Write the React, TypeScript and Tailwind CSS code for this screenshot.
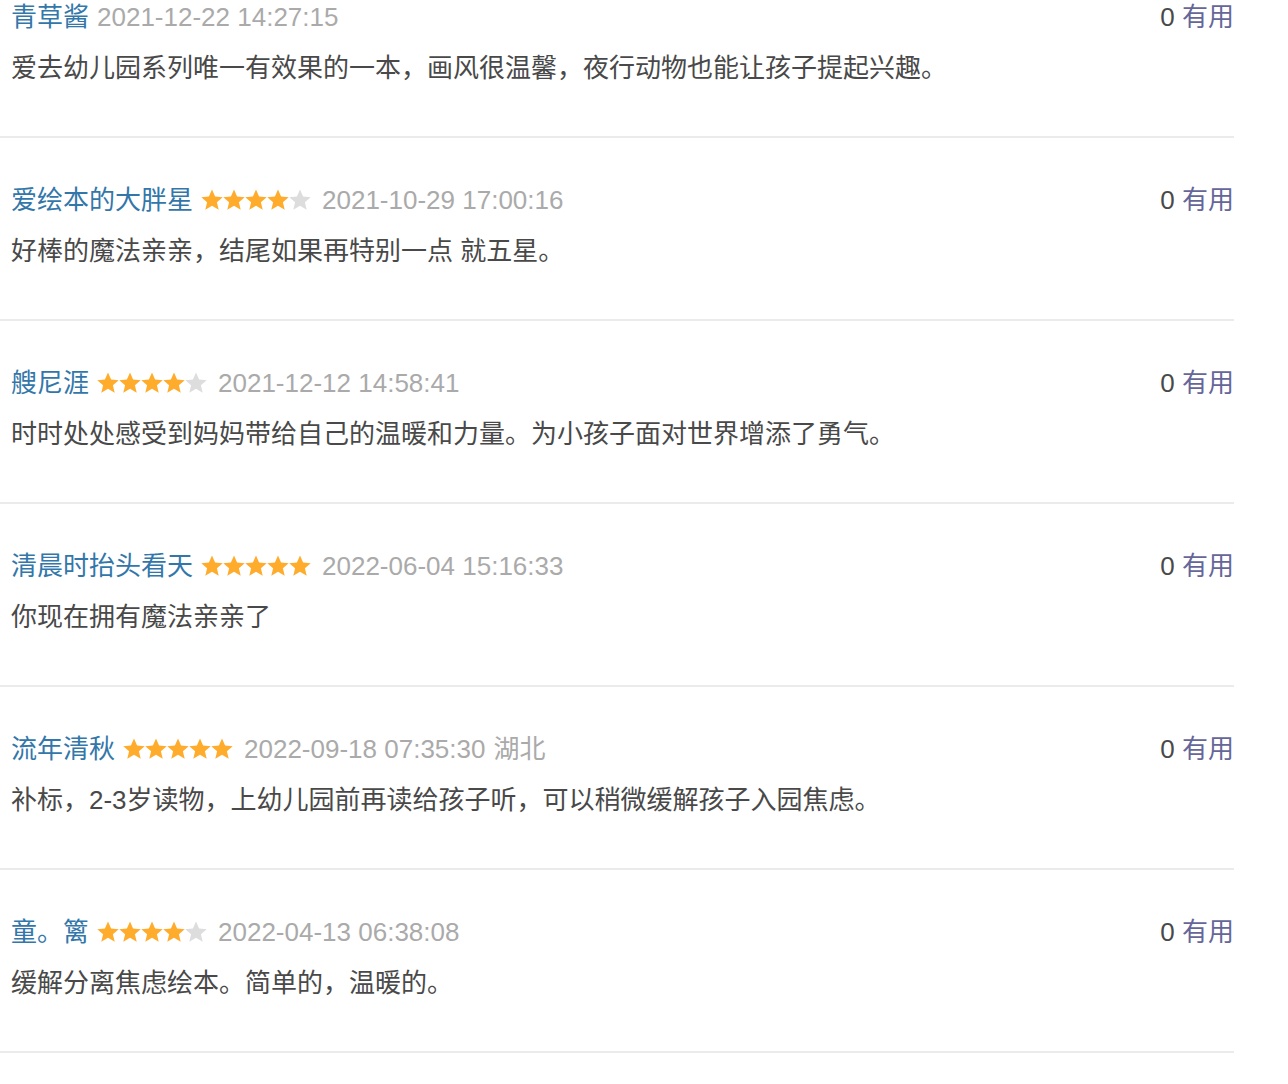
const comments = [
    {
        name: "青草酱",
        rating: 0,
        time: "2021-12-22 14:27:15",
        text: "爱去幼儿园系列唯一有效果的一本，画风很温馨，夜行动物也能让孩子提起兴趣。",
    },
    {
        name: "爱绘本的大胖星",
        rating: 4,
        time: "2021-10-29 17:00:16",
        text: "好棒的魔法亲亲，结尾如果再特别一点 就五星。",
    },
    {
        name: "艘尼涯",
        rating: 4,
        time: "2021-12-12 14:58:41",
        text: "时时处处感受到妈妈带给自己的温暖和力量。为小孩子面对世界增添了勇气。",
    },
    {
        name: "清晨时抬头看天",
        rating: 5,
        time: "2022-06-04 15:16:33",
        text: "你现在拥有魔法亲亲了",
    },
    {
        name: "流年清秋",
        rating: 5,
        time: "2022-09-18 07:35:30",
        location: "湖北",
        text: "补标，2-3岁读物，上幼儿园前再读给孩子听，可以稍微缓解孩子入园焦虑。",
    },
    {
        name: "童。篱",
        rating: 4,
        time: "2022-04-13 06:38:08",
        text: "缓解分离焦虑绘本。简单的，温暖的。",
    },
];

function Star({ on }: { on: boolean }) {
    return (
        <svg width="22" height="22" viewBox="1 1.5 22 21" className="block">
            <path
                d="M12 1.5l3.1 7.1 7.6.6-5.8 5 1.8 7.5L12 17.7l-6.7 4 1.8-7.5-5.8-5 7.6-.6z"
                fill={on ? "#ffac2d" : "#dddddd"}
            />
        </svg>
    );
}

function Stars({ value }: { value: number }) {
    return (
        <span className="ml-[8px] mr-[11px] flex items-center">
            {[1, 2, 3, 4, 5].map((i) => (
                <Star key={i} on={i <= value} />
            ))}
        </span>
    );
}

export default function App() {
    return (
        <div
            className="w-[1234px] -mt-[45px] bg-white text-[26px]"
            style={{ fontFamily: '"Liberation Sans", "Noto Sans CJK SC", sans-serif' }}
        >
            {comments.map((c, idx) => (
                <div
                    key={idx}
                    className="pl-[11px] pr-0 pt-[44px] pb-[50px] border-b-2 border-[#ebebeb]"
                >
                    <div className="flex items-center justify-between h-[36px] leading-[36px]">
                        <div className="flex items-center">
                            <span className="text-[#3377aa]">{c.name}</span>
                            {c.rating > 0 ? (
                                <Stars value={c.rating} />
                            ) : (
                                <span className="w-[8px]" />
                            )}
                            <span className="text-[#aaaaaa]">{c.time}</span>
                            {c.location && (
                                <span className="text-[#aaaaaa] ml-[8px]">{c.location}</span>
                            )}
                        </div>
                        <div>
                            <span className="text-[#494949]">0</span>{" "}
                            <span className="text-[#666699]">有用</span>
                        </div>
                    </div>
                    <p className="mt-[15px] leading-[36px] text-[#494949]">{c.text}</p>
                </div>
            ))}
        </div>
    );
}
